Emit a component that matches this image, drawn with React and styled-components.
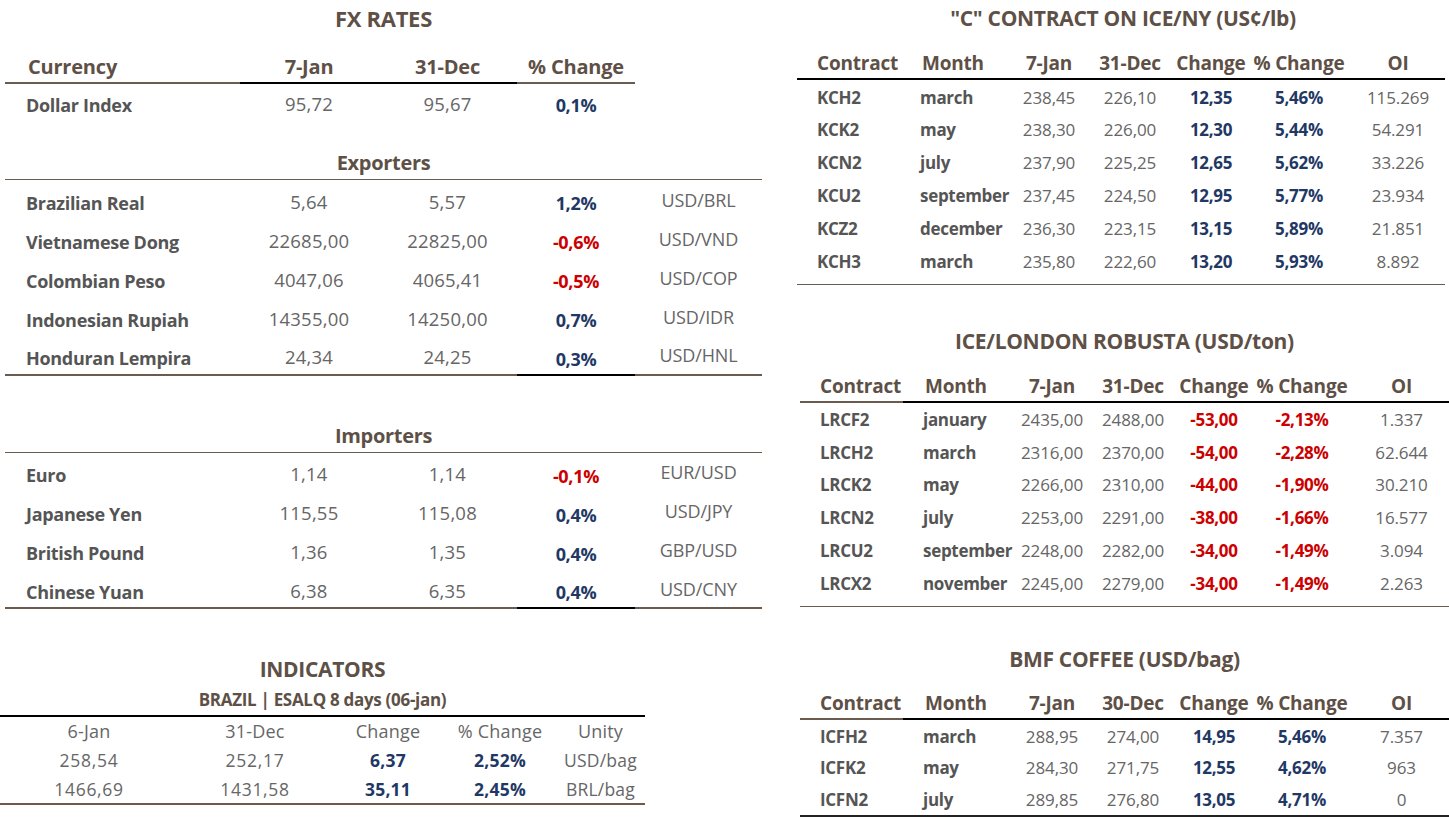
import React from 'react';
import styled, { createGlobalStyle } from 'styled-components';

const BROWN = '#5e5046';
const LINE = '#6b5b4f';
const NAVY = '#1f3864';
const RED = '#cc0000';
const LABEL = '#555555';
const VALUE = '#666666';
const BLACK = '#000000';

const GlobalStyle = createGlobalStyle`
  html, body {
    margin: 0;
    padding: 0;
    background: #ffffff;
  }
  body {
    font-family: "Open Sans", "Noto Sans", "Liberation Sans", sans-serif;
    color: ${VALUE};
  }
`;

const Page = styled.div`
  display: grid;
  grid-template-columns: 770px 652px;
  column-gap: 27px;
  width: 1449px;
  height: 819px;
  overflow: hidden;
`;

const Column = styled.div`
  display: flex;
  flex-direction: column;
`;

const Block = styled.div`
  width: ${p => p.$w}px;
  margin-left: ${p => p.$left || 0}px;
  padding-top: ${p => p.$top || 0}px;
  padding-bottom: ${p => p.$bottom || 0}px;
  border-bottom: ${p => p.$line ? `${p.$lineW || 1}px solid ${p.$line}` : 'none'};
`;

const Title = styled.div`
  text-align: center;
  font-weight: 700;
  font-size: ${p => p.$size || 21}px;
  letter-spacing: -0.3px;
  line-height: 36px;
  color: ${BROWN};
`;

const SubTitle = styled.div`
  text-align: center;
  font-weight: 700;
  font-size: 17px;
  letter-spacing: -0.3px;
  line-height: 26px;
  color: ${BROWN};
  padding-bottom: 2px;
  border-bottom: 2px solid ${BLACK};
`;

const Table = styled.table`
  width: 100%;
  table-layout: fixed;
  border-collapse: collapse;
  border-spacing: 0;
`;

const Col = styled.col`
  width: ${p => p.$w}px;
`;

const Row = styled.tr`
  height: ${p => p.$h}px;
`;

const Head = styled.th`
  height: ${p => p.$h || 42}px;
  padding: 0 0 4px ${p => p.$pad || 0}px;
  vertical-align: bottom;
  text-align: ${p => p.$align || 'center'};
  font-weight: 700;
  font-size: ${p => p.$size || 20}px;
  letter-spacing: -0.2px;
  line-height: 22px;
  color: ${BROWN};
  white-space: nowrap;
  border-bottom: 2px solid ${p => p.$line || 'transparent'};
`;

const Group = styled.td`
  height: 32px;
  padding: 0 0 4px;
  vertical-align: bottom;
  text-align: center;
  font-weight: 700;
  font-size: 20px;
  letter-spacing: -0.3px;
  line-height: 24px;
  color: ${BROWN};
  border-bottom: 1px solid ${LINE};
`;

const Cell = styled.td`
  padding: ${p => p.$shift || 0}px 0 0 ${p => p.$pad || 0}px;
  text-align: ${p => p.$align || 'center'};
  font-size: ${p => p.$size || 18}px;
  font-weight: ${p => (p.$bold ? 700 : 400)};
  letter-spacing: ${p => p.$track ?? (p.$bold ? -0.3 : -0.1)}px;
  line-height: 22px;
  color: ${p => p.$color || VALUE};
  white-space: nowrap;
  border-bottom: ${p => p.$line ? `${p.$lineW || 2}px solid ${p.$line}` : 'none'};
`;

const tone = v => (v.startsWith('-') ? RED : NAVY);

/* ---------- FX RATES ---------- */

const FX_COLS = [235, 138, 139, 118, 127];

const exporters = [
  ['Brazilian Real', '5,64', '5,57', '1,2%', 'USD/BRL'],
  ['Vietnamese Dong', '22685,00', '22825,00', '-0,6%', 'USD/VND'],
  ['Colombian Peso', '4047,06', '4065,41', '-0,5%', 'USD/COP'],
  ['Indonesian Rupiah', '14355,00', '14250,00', '0,7%', 'USD/IDR'],
  ['Honduran Lempira', '24,34', '24,25', '0,3%', 'USD/HNL'],
];

const importers = [
  ['Euro', '1,14', '1,14', '-0,1%', 'EUR/USD'],
  ['Japanese Yen', '115,55', '115,08', '0,4%', 'USD/JPY'],
  ['British Pound', '1,36', '1,35', '0,4%', 'GBP/USD'],
  ['Chinese Yuan', '6,38', '6,35', '0,4%', 'USD/CNY'],
];

const FxRow = ({ row, last }) => {
  const [name, a, b, pct, pair] = row;
  const line = c => (last ? c : null);
  return (
    <Row $h={39}>
      <Cell $align="left" $pad={21} $shift={7} $bold $color={LABEL} $line={line(LINE)}>{name}</Cell>
      <Cell $shift={5} $size={18.5} $track={0.2} $line={line(LINE)}>{a}</Cell>
      <Cell $shift={5} $size={18.5} $track={0.2} $line={line(LINE)}>{b}</Cell>
      <Cell $shift={8} $bold $color={tone(pct)} $line={line(BLACK)}>{pct}</Cell>
      <Cell $shift={1} $line={line(LINE)}>{pair}</Cell>
    </Row>
  );
};

const FxGroup = ({ title, rows, gap }) => (
  <>
    <Row $h={gap}><td colSpan={5} /></Row>
    <tr><Group colSpan={5}>{title}</Group></tr>
    {rows.map((r, i) => <FxRow key={r[0]} row={r} last={i === rows.length - 1} />)}
  </>
);

const FxRates = () => (
  <Block $w={757} $left={5}>
    <Title $size={22}>FX RATES</Title>
    <Table>
      <colgroup>{FX_COLS.map((w, i) => <Col key={i} $w={w} />)}</colgroup>
      <thead>
        <tr>
          <Head $align="left" $pad={23} $line={LINE}>Currency</Head>
          <Head $line={BLACK}>7-Jan</Head>
          <Head $line={BLACK}>31-Dec</Head>
          <Head $line={LINE}>% Change</Head>
          <Head />
        </tr>
      </thead>
      <tbody>
        <Row $h={40}>
          <Cell $align="left" $pad={21} $shift={2} $bold $color={LABEL}>Dollar Index</Cell>
          <Cell $shift={1} $size={18.5} $track={0.2}>95,72</Cell>
          <Cell $shift={1} $size={18.5} $track={0.2}>95,67</Cell>
          <Cell $shift={2} $bold $color={NAVY}>0,1%</Cell>
          <Cell />
        </Row>
        <FxGroup title="Exporters" rows={exporters} gap={20} />
        <FxGroup title="Importers" rows={importers} gap={41} />
      </tbody>
    </Table>
  </Block>
);

/* ---------- INDICATORS ---------- */

const IND_COLS = [178, 154, 112, 112, 89];

const indicators = [
  ['258,54', '252,17', '6,37', '2,52%', 'USD/bag'],
  ['1466,69', '1431,58', '35,11', '2,45%', 'BRL/bag'],
];

const Indicators = () => (
  <Block $w={645} $top={42} $line={LINE} $lineW={2}>
    <Title>INDICATORS</Title>
    <SubTitle>BRAZIL | ESALQ 8 days (06-jan)</SubTitle>
    <Table>
      <colgroup>{IND_COLS.map((w, i) => <Col key={i} $w={w} />)}</colgroup>
      <tbody>
        <Row $h={28}>
          {['6-Jan', '31-Dec', 'Change', '% Change', 'Unity'].map(h => (
            <Cell key={h} $size={18} $track={0.2} $color={VALUE}>{h}</Cell>
          ))}
        </Row>
        {indicators.map(r => (
          <Row key={r[0]} $h={29}>
            <Cell $size={17.5} $track={0.7}>{r[0]}</Cell>
            <Cell $size={17.5} $track={0.7}>{r[1]}</Cell>
            <Cell $size={17.5} $track={0.2} $bold $color={tone(r[2])}>{r[2]}</Cell>
            <Cell $size={17.5} $track={0.2} $bold $color={tone(r[3])}>{r[3]}</Cell>
            <Cell $size={17.5} $track={0.2}>{r[4]}</Cell>
          </Row>
        ))}
      </tbody>
    </Table>
  </Block>
);

/* ---------- FUTURES ---------- */

const NY_COLS = [116, 100, 72, 90, 72, 104, 94];
const LDN_COLS = [103, 113, 72, 90, 72, 104, 95];

const nyRows = [
  ['KCH2', 'march', '238,45', '226,10', '12,35', '5,46%', '115.269'],
  ['KCK2', 'may', '238,30', '226,00', '12,30', '5,44%', '54.291'],
  ['KCN2', 'july', '237,90', '225,25', '12,65', '5,62%', '33.226'],
  ['KCU2', 'september', '237,45', '224,50', '12,95', '5,77%', '23.934'],
  ['KCZ2', 'december', '236,30', '223,15', '13,15', '5,89%', '21.851'],
  ['KCH3', 'march', '235,80', '222,60', '13,20', '5,93%', '8.892'],
];

const ldnRows = [
  ['LRCF2', 'january', '2435,00', '2488,00', '-53,00', '-2,13%', '1.337'],
  ['LRCH2', 'march', '2316,00', '2370,00', '-54,00', '-2,28%', '62.644'],
  ['LRCK2', 'may', '2266,00', '2310,00', '-44,00', '-1,90%', '30.210'],
  ['LRCN2', 'july', '2253,00', '2291,00', '-38,00', '-1,66%', '16.577'],
  ['LRCU2', 'september', '2248,00', '2282,00', '-34,00', '-1,49%', '3.094'],
  ['LRCX2', 'november', '2245,00', '2279,00', '-34,00', '-1,49%', '2.263'],
];

const bmfRows = [
  ['ICFH2', 'march', '288,95', '274,00', '14,95', '5,46%', '7.357'],
  ['ICFK2', 'may', '284,30', '271,75', '12,55', '4,62%', '963'],
  ['ICFN2', 'july', '289,85', '276,80', '13,05', '4,71%', '0'],
];

const Futures = ({ cols, prevDate, rows, rowH, headH, firstLine, monthPad, bottom, endLine, endW }) => (
  <Block $w={cols.reduce((s, w) => s + w, 0)} $bottom={bottom} $line={endLine} $lineW={endW}>
    <Table>
      <colgroup>{cols.map((w, i) => <Col key={i} $w={w} />)}</colgroup>
      <thead>
        <tr>
          <Head $h={headH} $size={19} $align="left" $pad={20} $line={firstLine}>Contract</Head>
          <Head $h={headH} $size={19} $align="left" $pad={monthPad + 2} $line={BLACK}>Month</Head>
          <Head $h={headH} $size={19} $line={BLACK}>7-Jan</Head>
          <Head $h={headH} $size={19} $line={BLACK}>{prevDate}</Head>
          <Head $h={headH} $size={19} $line={BLACK}>Change</Head>
          <Head $h={headH} $size={19} $line={BLACK}>% Change</Head>
          <Head $h={headH} $size={19} $line={BLACK}>OI</Head>
        </tr>
      </thead>
      <tbody>
        {rows.map(r => (
          <Row key={r[0]} $h={rowH}>
            <Cell $shift={3} $size={17} $align="left" $pad={20} $bold $color={LABEL}>{r[0]}</Cell>
            <Cell $shift={3} $size={17} $align="left" $pad={monthPad} $bold $color={LABEL}>{r[1]}</Cell>
            <Cell $shift={3} $size={17}>{r[2]}</Cell>
            <Cell $shift={3} $size={17}>{r[3]}</Cell>
            <Cell $shift={3} $size={17} $bold $color={tone(r[4])}>{r[4]}</Cell>
            <Cell $shift={3} $size={17} $bold $color={tone(r[5])}>{r[5]}</Cell>
            <Cell $shift={3} $size={17}>{r[6]}</Cell>
          </Row>
        ))}
      </tbody>
    </Table>
  </Block>
);

const Shifted = styled.div`
  margin-left: ${p => p.$left}px;
`;

export default function App() {
  return (
    <>
      <GlobalStyle />
      <Page>
        <Column>
          <FxRates />
          <Indicators />
        </Column>
        <Column>
          <Title>"C" CONTRACT ON ICE/NY (US¢/lb)</Title>
          <Futures
            cols={NY_COLS} prevDate="31-Dec" rows={nyRows} rowH={33} headH={38}
            firstLine={BLACK} monthPad={7} bottom={7} endLine={LINE} endW={1}
          />
          <Shifted $left={3}>
            <Block $w={649} $top={38}>
              <Title>ICE/LONDON ROBUSTA (USD/ton)</Title>
            </Block>
            <Futures
              cols={LDN_COLS} prevDate="31-Dec" rows={ldnRows} rowH={32.75} headH={38}
              firstLine={LINE} monthPad={20} bottom={7} endLine={LINE} endW={1}
            />
            <Block $w={649} $top={34}>
              <Title>BMF COFFEE (USD/bag)</Title>
            </Block>
            <Futures
              cols={LDN_COLS} prevDate="30-Dec" rows={bmfRows} rowH={32} headH={37}
              firstLine={LINE} monthPad={20} bottom={0} endLine="#222222" endW={2}
            />
          </Shifted>
        </Column>
      </Page>
    </>
  );
}
